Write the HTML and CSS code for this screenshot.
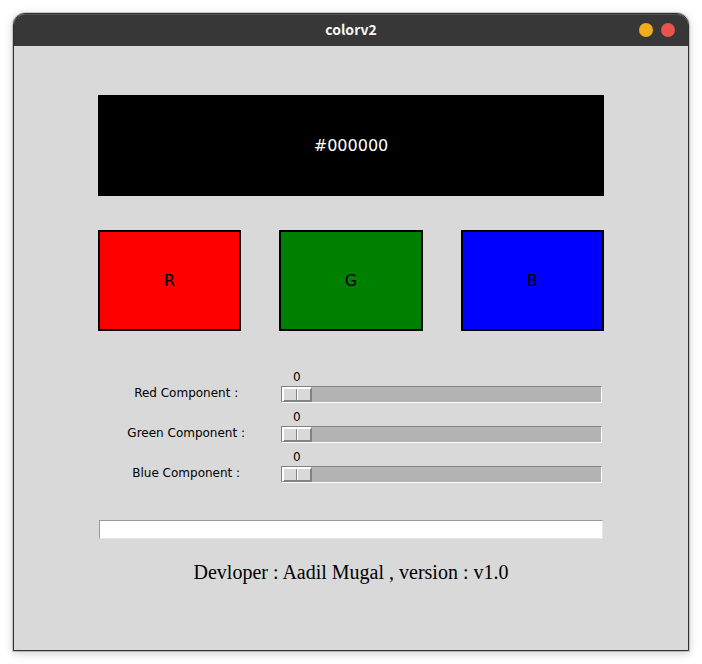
FILE: index.html
```html
<!DOCTYPE html>
<html lang="en">
<head>
<meta charset="utf-8">
<meta name="viewport" content="width=device-width, initial-scale=1">
<title>colorv2</title>
<link rel="stylesheet" href="styles.css">
</head>
<body>
<div class="window">
  <header class="titlebar">
    <h1 class="title">colorv2</h1>
    <div class="controls">
      <button class="control minimize" type="button" aria-label="Minimize"></button>
      <button class="control close" type="button" aria-label="Close"></button>
    </div>
  </header>
  <main class="content">
    <div class="preview">#000000</div>
    <div class="tiles">
      <div class="tile red">R</div>
      <div class="tile green">G</div>
      <div class="tile blue">B</div>
    </div>
    <div class="sliders">
      <div class="row">
        <label class="label" for="red">Red Component :</label>
        <div class="scale">
          <output class="value" for="red">0</output>
          <input class="range" id="red" type="range" min="0" max="255" value="0">
        </div>
      </div>
      <div class="row">
        <label class="label" for="green">Green Component :</label>
        <div class="scale">
          <output class="value" for="green">0</output>
          <input class="range" id="green" type="range" min="0" max="255" value="0">
        </div>
      </div>
      <div class="row">
        <label class="label" for="blue">Blue Component :</label>
        <div class="scale">
          <output class="value" for="blue">0</output>
          <input class="range" id="blue" type="range" min="0" max="255" value="0">
        </div>
      </div>
    </div>
    <input class="entry" type="text" aria-label="Color code">
    <p class="credit">Devloper : Aadil Mugal , version : v1.0</p>
  </main>
</div>
</body>
</html>
```
FILE: styles.css
```css
* {
  box-sizing: border-box;
}

body {
  margin: 0;
  padding: 13px;
  background: #fff;
  color: #000;
  font-family: "DejaVu Sans", sans-serif;
}

.window {
  display: flex;
  flex-direction: column;
  min-height: calc(100vh - 26px);
  border: 1px solid #303030;
  border-radius: 12px 12px 0 0;
  background: #d9d9d9;
  box-shadow: 0 0 0 1px rgba(0, 0, 0, 0.16), 0 2px 10px rgba(0, 0, 0, 0.22);
}

.titlebar {
  display: grid;
  grid-template-columns: 1fr auto 1fr;
  align-items: center;
  height: 32px;
  padding: 0 13px 2px;
  border-top: 1px solid #505050;
  border-radius: 11px 11px 0 0;
  background: #373737;
}

.title {
  grid-column: 2;
  margin: 0;
  padding-bottom: 2px;
  color: #f6f6f6;
  font: bold 14px/20px "Noto Sans CJK SC", sans-serif;
}

.controls {
  display: flex;
  justify-content: flex-end;
  gap: 8px;
}

.control {
  width: 14px;
  height: 14px;
  padding: 0;
  border: 0;
  border-radius: 50%;
}

.minimize {
  background: #f0ad1c;
}

.close {
  background: #ea524c;
}

.content {
  display: flex;
  flex-direction: column;
  padding: 49px 84px;
}

.preview {
  display: grid;
  place-items: center;
  height: 101px;
  background: #000;
  color: #fff;
  font-size: 16px;
}

.tiles {
  display: grid;
  grid-template-columns: repeat(3, 1fr);
  gap: 38px;
  margin-top: 34px;
}

.tile {
  display: grid;
  place-items: center;
  height: 101px;
  border: 2px solid #000;
  font-size: 16px;
}

.red {
  background: #f00;
}

.green {
  background: #008000;
}

.blue {
  background: #00f;
}

.sliders {
  display: grid;
  gap: 6px;
  margin-top: 38px;
  padding-right: 2px;
  font-size: 12px;
}

.row {
  display: grid;
  grid-template-columns: 35% 1fr;
  column-gap: 7px;
}

.label {
  align-self: end;
  line-height: 16px;
  padding-bottom: 2px;
  text-align: center;
}

.scale {
  display: flex;
  flex-direction: column;
}

.value {
  width: 31px;
  line-height: 17px;
  text-align: center;
}

.range {
  width: 100%;
  height: 17px;
  margin: 0;
  border: 1px solid;
  border-color: #828282 #fff #fff #828282;
  background: #b3b3b3;
  appearance: none;
}

.range::-webkit-slider-thumb {
  width: 30px;
  height: 15px;
  border: 1px solid;
  border-color: #fff #828282 #828282 #fff;
  background: linear-gradient(to right, #d9d9d9 13px, #828282 13px 14px, #fff 14px 15px, #d9d9d9 15px);
  box-shadow: inset 1px 1px #fff, inset -1px -1px #828282;
  appearance: none;
}

.entry {
  height: 19px;
  margin: 37px 1px 0;
  padding: 0 2px;
  border: 1px solid;
  border-color: #999 #e6e6e6 #e6e6e6 #999;
  background: #fff;
  font: 12px "DejaVu Sans", sans-serif;
}

.credit {
  margin: 21px 0 0;
  font: 20px/24px "Liberation Serif", serif;
  text-align: center;
}
```
